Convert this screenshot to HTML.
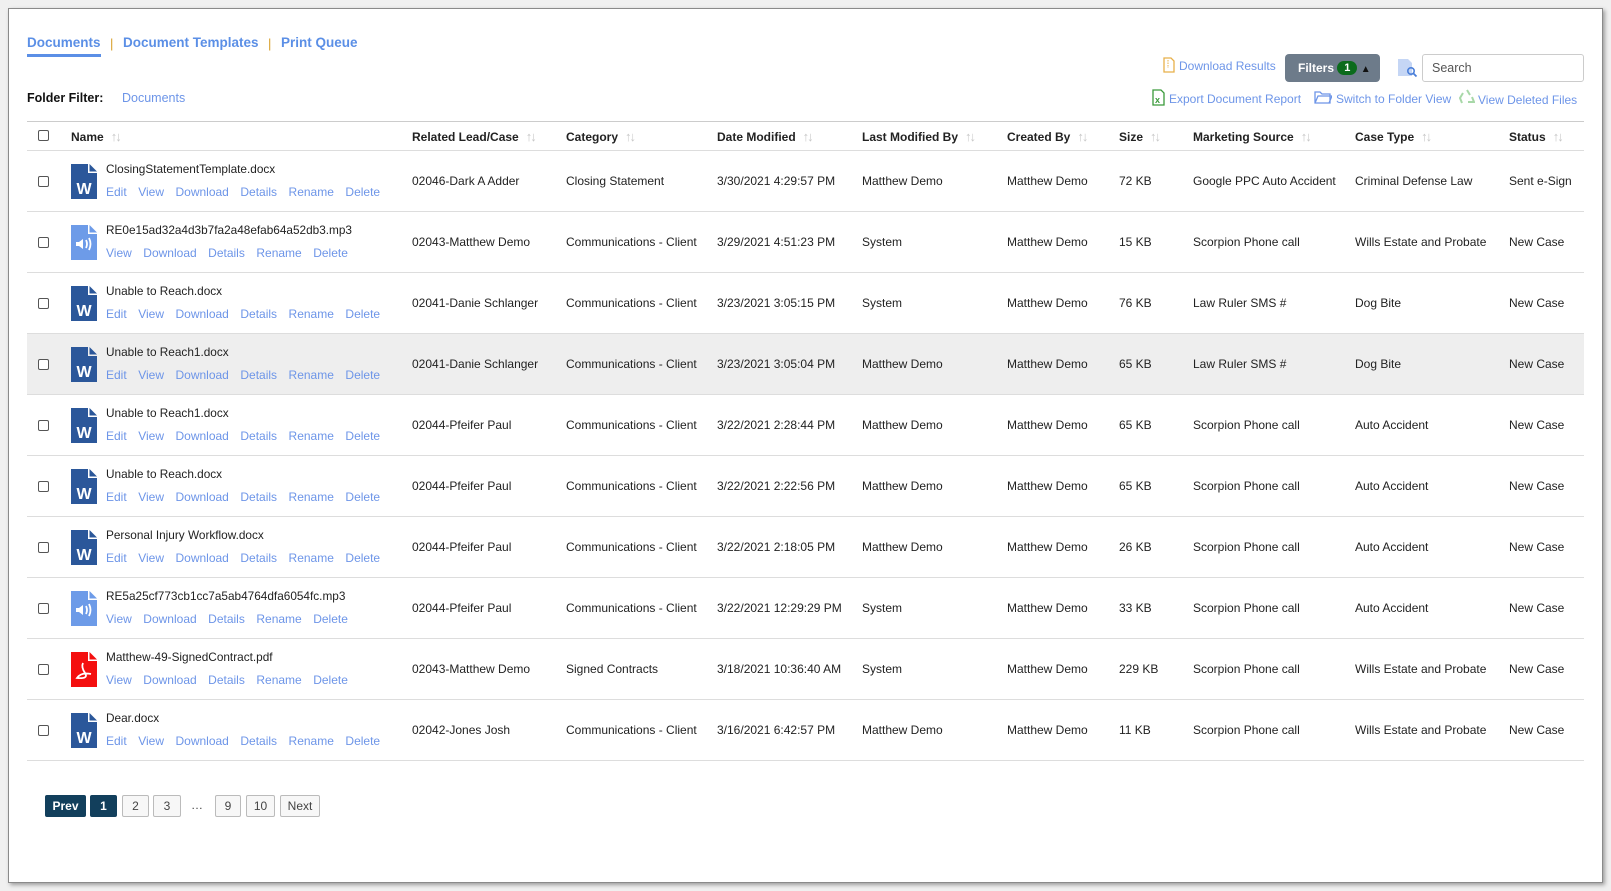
<!DOCTYPE html>
<html><head><style>
*{box-sizing:border-box;margin:0;padding:0}
body{width:1611px;height:891px;background:#f0f0f0;font-family:"Liberation Sans",Arial,sans-serif;font-size:12px;color:#222;position:relative;overflow:hidden}
.box{position:absolute;left:8px;top:8px;width:1595px;height:875px;background:#fff;border:1px solid #8a8a8a;box-shadow:2px 2px 4px rgba(0,0,0,.35)}
.a{position:absolute;white-space:nowrap}
.tab{font-weight:bold;font-size:13.5px;color:#5b8fe6}
.sep{color:#d9a02b;font-size:13px}
.lnk{color:#6d95e8}
.hdr{font-weight:bold;color:#222}
.arr{color:#c8c8c8;font-size:13px;letter-spacing:-2px;margin-left:7px;font-weight:bold}
.cb{position:absolute;width:11px;height:11px;border:1px solid #555;border-radius:2px;background:#fff}
.row{position:absolute;left:27px;width:1557px;height:61px;border-bottom:1px solid #ddd}
.links span{margin-right:11.5px}
.pg{position:absolute;top:795px;height:22px;border:1px solid #bbb;border-radius:2px;background:#f7f7f7;color:#444;text-align:center;line-height:20px;font-size:12px}
.pg.on{background:#123f5c;color:#fff;border-color:#123f5c}
</style></head><body>
<div class="box"></div>
<div class="a tab" style="left:27px;top:35px">Documents</div>
<div class="a" style="left:27px;top:54px;width:74px;height:3px;background:#5b8fe6"></div>
<div class="a sep" style="left:110px;top:36px">|</div>
<div class="a tab" style="left:123px;top:35px">Document Templates</div>
<div class="a sep" style="left:268px;top:36px">|</div>
<div class="a tab" style="left:281px;top:35px">Print Queue</div>
<div class="a" style="left:27px;top:91px;font-weight:bold;font-size:12.5px;color:#111">Folder Filter:</div>
<div class="a lnk" style="left:122px;top:91px;font-size:12.5px">Documents</div>

<svg class="a" style="left:1163px;top:57px" width="12" height="16"><path d="M1 1h7l3 3v11H1z" fill="none" stroke="#e8b04a" stroke-width="1.3"/><path d="M5 3v8" stroke="#e8b04a" stroke-dasharray="1.5 1"/></svg>
<div class="a lnk" style="left:1179px;top:59px">Download Results</div>
<div class="a" style="left:1285px;top:54px;width:95px;height:28px;background:#6d7b8a;border-radius:4px;color:#fff;font-weight:bold;line-height:28px;padding-left:13px">Filters <span style="display:inline-block;background:#0b6b1c;border-radius:8px;width:20px;height:14px;line-height:14px;text-align:center;font-size:11px;vertical-align:1px">1</span> <span style="font-size:10px;color:#111">&#9650;</span></div>
<svg class="a" style="left:1397px;top:58px" width="22" height="20"><path d="M1 1h10l4 4v13H1z" fill="#c5d6f5"/><circle cx="14" cy="13" r="3.2" fill="none" stroke="#4a7fd9" stroke-width="1.6"/><path d="M16.5 15.5l3 3" stroke="#4a7fd9" stroke-width="1.8"/></svg>
<div class="a" style="left:1422px;top:54px;width:162px;height:28px;border:1px solid #ccc;border-radius:3px;padding:6px 9px;color:#555;font-size:12.5px">Search</div>

<svg class="a" style="left:1152px;top:89px" width="13" height="17"><path d="M1 1h8l3 3v12H1z" fill="#fff" stroke="#3a9a3a" stroke-width="1.3"/><text x="3" y="14" font-size="9" font-weight="bold" fill="#3a9a3a" font-family="Liberation Sans">x</text></svg>
<div class="a lnk" style="left:1169px;top:92px">Export Document Report</div>
<svg class="a" style="left:1314px;top:90px" width="18" height="14"><path d="M1 2h5l2 2h8v9H1z M1 13l3-7h14l-3 7" fill="none" stroke="#6d95e8" stroke-width="1.3"/></svg>
<div class="a lnk" style="left:1336px;top:92px">Switch to Folder View</div>
<svg class="a" style="left:1459px;top:89px" width="16" height="16"><path d="M8 1l3 5M13 8l2 5H9M3 14L1 9l3-5" fill="none" stroke="#a8d8a8" stroke-width="2"/></svg>
<div class="a lnk" style="left:1478px;top:93px">View Deleted Files</div>

<div class="a" style="left:27px;top:121px;width:1557px;height:1px;background:#ccc"></div>
<div class="row" style="top:121px;height:30px"></div>
<div class="cb" style="left:38px;top:130px"></div>
<div class="a hdr" style="left:71px;top:129px">Name<span class="arr">↑↓</span></div>
<div class="a hdr" style="left:412px;top:129px">Related Lead/Case<span class="arr">↑↓</span></div>
<div class="a hdr" style="left:566px;top:129px">Category<span class="arr">↑↓</span></div>
<div class="a hdr" style="left:717px;top:129px">Date Modified<span class="arr">↑↓</span></div>
<div class="a hdr" style="left:862px;top:129px">Last Modified By<span class="arr">↑↓</span></div>
<div class="a hdr" style="left:1007px;top:129px">Created By<span class="arr">↑↓</span></div>
<div class="a hdr" style="left:1119px;top:129px">Size<span class="arr">↑↓</span></div>
<div class="a hdr" style="left:1193px;top:129px">Marketing Source<span class="arr">↑↓</span></div>
<div class="a hdr" style="left:1355px;top:129px">Case Type<span class="arr">↑↓</span></div>
<div class="a hdr" style="left:1509px;top:129px">Status<span class="arr">↑↓</span></div>

<div id="rows"></div>
<script>
var d=[
["w","ClosingStatementTemplate.docx","02046-Dark A Adder","Closing Statement","3/30/2021 4:29:57 PM","Matthew Demo","Matthew Demo","72 KB","Google PPC Auto Accident","Criminal Defense Law","Sent e-Sign"],
["a","RE0e15ad32a4d3b7fa2a48efab64a52db3.mp3","02043-Matthew Demo","Communications - Client","3/29/2021 4:51:23 PM","System","Matthew Demo","15 KB","Scorpion Phone call","Wills Estate and Probate","New Case"],
["w","Unable to Reach.docx","02041-Danie Schlanger","Communications - Client","3/23/2021 3:05:15 PM","System","Matthew Demo","76 KB","Law Ruler SMS #","Dog Bite","New Case"],
["w","Unable to Reach1.docx","02041-Danie Schlanger","Communications - Client","3/23/2021 3:05:04 PM","Matthew Demo","Matthew Demo","65 KB","Law Ruler SMS #","Dog Bite","New Case"],
["w","Unable to Reach1.docx","02044-Pfeifer Paul","Communications - Client","3/22/2021 2:28:44 PM","Matthew Demo","Matthew Demo","65 KB","Scorpion Phone call","Auto Accident","New Case"],
["w","Unable to Reach.docx","02044-Pfeifer Paul","Communications - Client","3/22/2021 2:22:56 PM","Matthew Demo","Matthew Demo","65 KB","Scorpion Phone call","Auto Accident","New Case"],
["w","Personal Injury Workflow.docx","02044-Pfeifer Paul","Communications - Client","3/22/2021 2:18:05 PM","Matthew Demo","Matthew Demo","26 KB","Scorpion Phone call","Auto Accident","New Case"],
["a","RE5a25cf773cb1cc7a5ab4764dfa6054fc.mp3","02044-Pfeifer Paul","Communications - Client","3/22/2021 12:29:29 PM","System","Matthew Demo","33 KB","Scorpion Phone call","Auto Accident","New Case"],
["p","Matthew-49-SignedContract.pdf","02043-Matthew Demo","Signed Contracts","3/18/2021 10:36:40 AM","System","Matthew Demo","229 KB","Scorpion Phone call","Wills Estate and Probate","New Case"],
["w","Dear.docx","02042-Jones Josh","Communications - Client","3/16/2021 6:42:57 PM","Matthew Demo","Matthew Demo","11 KB","Scorpion Phone call","Wills Estate and Probate","New Case"]];
var xs=[412,566,717,862,1007,1119,1193,1355,1509],h="";
function pg(c){return '<path d="M0 0h17v9h9v26H0z" fill="'+c+'"/><path d="M18.5 0L26 7.5h-7.5z" fill="'+c+'"/>';}
var ic={w:pg('#2b579a')+'<text x="13" y="30" text-anchor="middle" font-size="16" font-weight="bold" fill="#fff" font-family="Liberation Sans">W</text>',
a:pg('#6d9be8')+'<path d="M5 17h3l4-3v10l-4-3H5z" fill="#fff"/><path d="M15 15q2 4 0 8M18 13q3 6 0 12" fill="none" stroke="#fff" stroke-width="1.8"/>',
p:pg('#f40f0f')+'<path d="M12 11q-2 4 2 10t-8 5q4-6 14-4" fill="none" stroke="#fff" stroke-width="1.8"/>'};
d.forEach(function(r,i){var t=151+61*i;
h+='<div class="row" style="top:'+t+'px;'+(i==3?'background:#eee':'')+'"></div>';
h+='<div class="cb" style="left:38px;top:'+(t+25)+'px"></div>';
h+='<svg class="a" style="left:71px;top:'+(t+13)+'px" width="26" height="35">'+ic[r[0]]+'</svg>';
h+='<div class="a" style="left:106px;top:'+(t+11)+'px;font-size:11.8px">'+r[1]+'</div>';
var l=r[0]=='w'?['Edit','View','Download','Details','Rename','Delete']:['View','Download','Details','Rename','Delete'];
h+='<div class="a lnk links" style="left:106px;top:'+(t+34)+'px"><span>'+l.join('</span><span>')+'</span></div>';
for(var k=0;k<9;k++)h+='<div class="a" style="left:'+xs[k]+'px;top:'+(t+23)+'px">'+r[k+2]+'</div>';});
document.getElementById('rows').innerHTML=h;
</script>
<div class="pg on" style="left:45px;width:41px;font-weight:bold">Prev</div>
<div class="pg on" style="left:90px;width:27px;font-weight:bold">1</div>
<div class="pg" style="left:122px;width:27px">2</div>
<div class="pg" style="left:153px;width:28px">3</div>
<div class="a" style="left:191px;top:798px;color:#444">…</div>
<div class="pg" style="left:215px;width:26px">9</div>
<div class="pg" style="left:246px;width:29px">10</div>
<div class="pg" style="left:280px;width:40px">Next</div>
</body></html>
